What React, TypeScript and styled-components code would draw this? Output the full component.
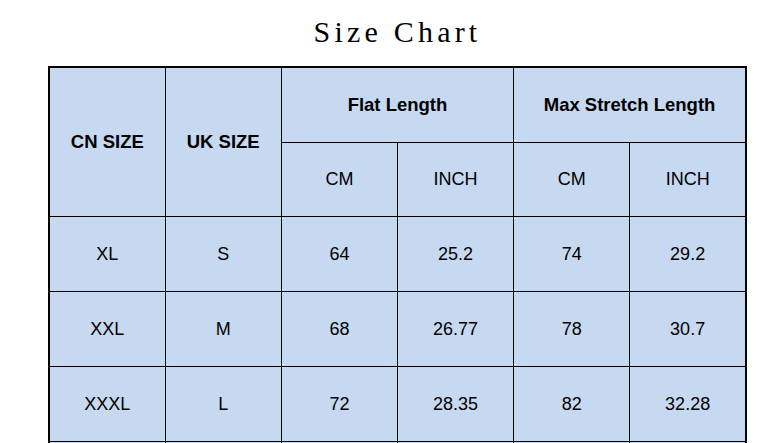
import React from 'react';
import styled, { createGlobalStyle } from 'styled-components';

const GlobalStyle = createGlobalStyle`
  html, body {
    margin: 0;
    padding: 0;
    background: #ffffff;
    overflow: hidden;
  }
`;

const Page = styled.div`
  width: 699px;
  margin-left: 48px;
  display: flex;
  flex-direction: column;
`;

const Title = styled.h1`
  margin: 0 0 19px;
  padding-top: 17px;
  font-family: 'Liberation Serif', serif;
  font-size: 30px;
  font-weight: 400;
  line-height: 30px;
  letter-spacing: 4.2px;
  text-align: center;
  color: #000000;
`;

const ChartTable = styled.table`
  width: 699px;
  table-layout: fixed;
  border-collapse: collapse;
  border: 2px solid #000000;
  font-family: 'Liberation Sans', Arial, sans-serif;
  color: #000000;
`;

const HeadCell = styled.th<{ $tall?: boolean }>`
  height: ${({ $tall }) => ($tall ? 74 : 73)}px;
  padding: 0;
  border: 1px solid #000000;
  background: #c6d9f1;
  font-size: 18.5px;
  font-weight: 700;
  text-align: center;
  vertical-align: middle;
`;

const UnitCell = styled.td`
  height: 73px;
  padding: 0;
  border: 1px solid #000000;
  background: #c6d9f1;
  font-size: 18px;
  text-align: center;
  vertical-align: middle;
`;

const DataCell = styled.td`
  height: 74px;
  padding: 0;
  border: 1px solid #000000;
  background: #c6d9f1;
  font-size: 18px;
  text-align: center;
  vertical-align: middle;
`;

type SizeRow = {
  cn: string;
  uk: string;
  flatCm: string;
  flatInch: string;
  maxCm: string;
  maxInch: string;
};

const rows: SizeRow[] = [
  { cn: 'XL', uk: 'S', flatCm: '64', flatInch: '25.2', maxCm: '74', maxInch: '29.2' },
  { cn: 'XXL', uk: 'M', flatCm: '68', flatInch: '26.77', maxCm: '78', maxInch: '30.7' },
  { cn: 'XXXL', uk: 'L', flatCm: '72', flatInch: '28.35', maxCm: '82', maxInch: '32.28' },
];

export default function App() {
  return (
    <>
      <GlobalStyle />
      <Page>
        <Title>Size Chart</Title>
        <ChartTable>
          <colgroup>
            {Array.from({ length: 6 }).map((_, i) => (
              <col key={i} />
            ))}
          </colgroup>
          <thead>
            <tr>
              <HeadCell rowSpan={2}>CN SIZE</HeadCell>
              <HeadCell rowSpan={2}>UK SIZE</HeadCell>
              <HeadCell colSpan={2} $tall>Flat Length</HeadCell>
              <HeadCell colSpan={2} $tall>Max Stretch Length</HeadCell>
            </tr>
            <tr>
              <UnitCell>CM</UnitCell>
              <UnitCell>INCH</UnitCell>
              <UnitCell>CM</UnitCell>
              <UnitCell>INCH</UnitCell>
            </tr>
          </thead>
          <tbody>
            {rows.map((row) => (
              <tr key={row.cn}>
                <DataCell>{row.cn}</DataCell>
                <DataCell>{row.uk}</DataCell>
                <DataCell>{row.flatCm}</DataCell>
                <DataCell>{row.flatInch}</DataCell>
                <DataCell>{row.maxCm}</DataCell>
                <DataCell>{row.maxInch}</DataCell>
              </tr>
            ))}
            <tr>
              {Array.from({ length: 6 }).map((_, i) => (
                <DataCell key={i} />
              ))}
            </tr>
          </tbody>
        </ChartTable>
      </Page>
    </>
  );
}
